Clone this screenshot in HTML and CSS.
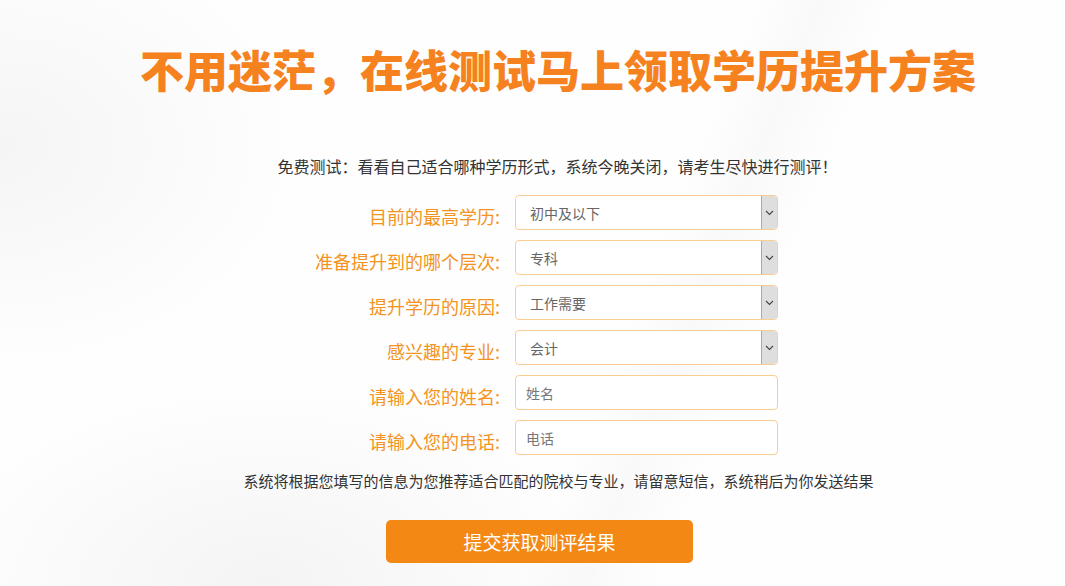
FILE: index.html
```html
<!DOCTYPE html>
<html lang="zh-CN">
<head>
    <meta charset="UTF-8">
    <meta name="viewport" content="width=device-width, initial-scale=1.0">
    <title>在线测试 学历提升方案</title>
    <link rel="stylesheet" href="styles.css">
</head>
<body>
    <div class="page">
        <h1 class="title">不用迷茫，在线测试马上领取学历提升方案</h1>
        <p class="intro">免费测试：看看自己适合哪种学历形式，系统今晚关闭，请考生尽快进行测评！</p>

        <form class="test-form" id="testForm">
            <label for="edu">目前的最高学历:</label>
            <div class="select-wrap">
                <select id="edu">
                    <option>初中及以下</option>
                    <option>高中/中专</option>
                    <option>大专</option>
                    <option>本科</option>
                </select>
                <span class="arrow"><svg width="9" height="6" viewBox="0 0 9 6"><path d="M1 1l3.5 3.5L8 1" fill="none" stroke="#444" stroke-width="1.1"/></svg></span>
            </div>

            <label for="level">准备提升到的哪个层次:</label>
            <div class="select-wrap">
                <select id="level">
                    <option>专科</option>
                    <option>本科</option>
                    <option>研究生</option>
                </select>
                <span class="arrow"><svg width="9" height="6" viewBox="0 0 9 6"><path d="M1 1l3.5 3.5L8 1" fill="none" stroke="#444" stroke-width="1.1"/></svg></span>
            </div>

            <label for="reason">提升学历的原因:</label>
            <div class="select-wrap">
                <select id="reason">
                    <option>工作需要</option>
                    <option>考证需要</option>
                    <option>个人提升</option>
                </select>
                <span class="arrow"><svg width="9" height="6" viewBox="0 0 9 6"><path d="M1 1l3.5 3.5L8 1" fill="none" stroke="#444" stroke-width="1.1"/></svg></span>
            </div>

            <label for="major">感兴趣的专业:</label>
            <div class="select-wrap">
                <select id="major">
                    <option>会计</option>
                    <option>工商管理</option>
                    <option>计算机</option>
                </select>
                <span class="arrow"><svg width="9" height="6" viewBox="0 0 9 6"><path d="M1 1l3.5 3.5L8 1" fill="none" stroke="#444" stroke-width="1.1"/></svg></span>
            </div>

            <label for="name">请输入您的姓名:</label>
            <input type="text" id="name" placeholder="姓名">

            <label for="phone">请输入您的电话:</label>
            <input type="text" id="phone" placeholder="电话">
        </form>

        <p class="note">系统将根据您填写的信息为您推荐适合匹配的院校与专业，请留意短信，系统稍后为你发送结果</p>

        <div class="actions">
            <button type="button" class="submit">提交获取测评结果</button>
        </div>
    </div>
</body>
</html>
```

FILE: styles.css
```css
html, body {
    margin: 0;
    height: 100%;
}
body {
    font-family: "Noto Sans CJK SC", "Microsoft YaHei", sans-serif;
    color: #333;
    background:
        linear-gradient(112deg, rgba(0,0,0,0) 58%, rgba(0,0,0,0.018) 63%, rgba(0,0,0,0) 69%),
        radial-gradient(ellipse 300px 220px at 0% 25%, #f5f5f5, rgba(255,255,255,0) 100%),
        radial-gradient(ellipse 340px 200px at 25% 100%, #f4f4f4, rgba(255,255,255,0) 100%),
        #fefefe;
    overflow: hidden;
}
.page {
    width: 1065px;
    padding-top: 41px;
}
.title {
    margin: 0;
    padding-left: 51px;
    text-align: center;
    font-size: 44px;
    line-height: 56px;
    font-weight: 900;
    color: #f5821f;
}
.intro {
    margin: 57px 0 0;
    padding-left: 50px;
    text-align: center;
    font-size: 16px;
    line-height: 24px;
    color: #333;
}
.test-form {
    display: grid;
    grid-template-columns: 300px 263px;
    column-gap: 15px;
    row-gap: 10px;
    margin: 17px 0 0 200px;
    align-items: center;
}
.test-form label {
    text-align: right;
    font-size: 18px;
    color: #f39422;
    padding-top: 6px;
}
.select-wrap {
    position: relative;
}
.test-form select,
.test-form input {
    display: block;
    box-sizing: border-box;
    width: 263px;
    height: 35px;
    margin: 0;
    border: 1px solid #fbcd92;
    border-radius: 4px;
    background: #fff;
    font-family: inherit;
    font-size: 14px;
    color: #666;
    outline: none;
}
.test-form select {
    -webkit-appearance: none;
    appearance: none;
    padding: 0 0 0 14px;
}
.test-form input {
    padding: 0 10px;
}
.test-form input::placeholder {
    color: #777;
}
.arrow {
    position: absolute;
    top: 1px;
    right: 1px;
    bottom: 1px;
    width: 15px;
    background: #dedede;
    border-left: 1px solid #a9a9a9;
    border-radius: 0 3px 3px 0;
    display: flex;
    align-items: center;
    justify-content: center;
    pointer-events: none;
}
.note {
    margin: 14px 0 0;
    padding-left: 52px;
    text-align: center;
    font-size: 15px;
    line-height: 24px;
    color: #333;
}
.actions {
    display: flex;
    justify-content: center;
    padding-left: 14px;
    margin-top: 27px;
}
.submit {
    width: 307px;
    height: 43px;
    border: none;
    border-radius: 5px;
    background: #f48815;
    color: #fff;
    font-family: inherit;
    font-size: 19px;
    cursor: pointer;
}
.submit:hover {
    background: #e67a0a;
}
```
